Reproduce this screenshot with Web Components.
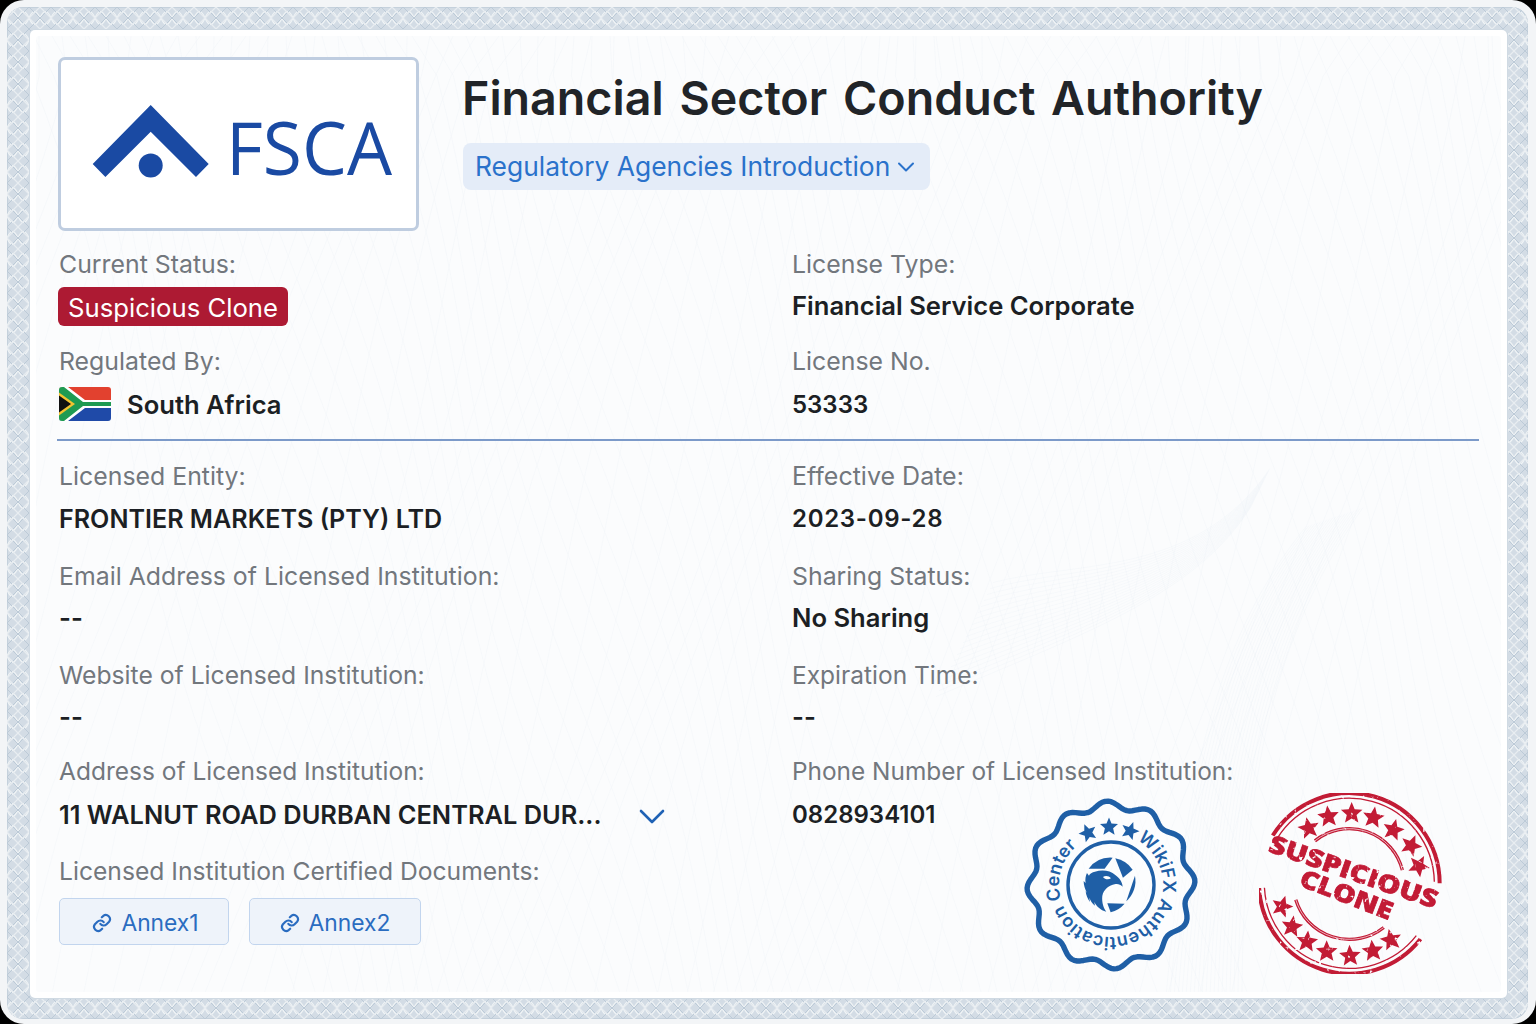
<!DOCTYPE html>
<html lang="en">
<head>
<meta charset="utf-8">
<title>FSCA</title>
<style>
	html, body { margin: 0; padding: 0; background: #000; }
	body { width: 1536px; height: 1024px; overflow: hidden; font-family: Inter, "Liberation Sans", sans-serif; }
</style>
</head>
<body>
<cert-frame>
	<cert-header title="Financial Sector Conduct Authority" link="Regulatory Agencies Introduction"></cert-header>

	<field-grid rows="97px 97px" style="margin-top:16px">
		<cert-field label="Current Status:"><status-badge>Suspicious Clone</status-badge></cert-field>
		<cert-field label="License Type:">Financial Service Corporate</cert-field>
		<cert-field label="Regulated By:" style="--value-gap:10px"><za-flag></za-flag><span style="margin-left:16px">South Africa</span></cert-field>
		<cert-field label="License No." style="--value-size:24px;--value-gap:10px">53333</cert-field>
	</field-grid>

	<field-grid class="lower" rows="100px 99px 96px 100px">
		<cert-field label="Licensed Entity:" style="--value-size:25.1px">FRONTIER MARKETS (PTY) LTD</cert-field>
		<cert-field label="Effective Date:" style="--label-size:25px;--value-size:24px;--value-track:.7px">2023-09-28</cert-field>
		<cert-field label="Email Address of Licensed Institution:" style="--value-gap:8px">--</cert-field>
		<cert-field label="Sharing Status:" style="--value-gap:8px">No Sharing</cert-field>
		<cert-field label="Website of Licensed Institution:" style="--label-size:24.7px;--value-gap:8px">--</cert-field>
		<cert-field label="Expiration Time:" style="--label-size:24.5px;--value-gap:8px">--</cert-field>
		<cert-field label="Address of Licensed Institution:" style="--label-size:24.5px;--value-size:25.4px;--value-gap:10px">11 WALNUT ROAD DURBAN CENTRAL DUR...<down-chevron></down-chevron></cert-field>
		<cert-field label="Phone Number of Licensed Institution:" style="--label-size:24.4px;--value-size:24px;--value-gap:10px">0828934101</cert-field>
		<cert-field label="Licensed Institution Certified Documents:" style="--label-size:24.65px">
			<annex-link style="padding-left:3px">Annex1</annex-link><annex-link style="margin-left:20px;width:172px">Annex2</annex-link>
		</cert-field>
	</field-grid>

	<wikifx-seal></wikifx-seal>
	<clone-stamp></clone-stamp>
</cert-frame>

<script>
(function(){

	function starPoints(cx, cy, r, rot) {
		var pts = [];
		for (var i = 0; i < 10; i++) {
			var a = (rot || 0) - Math.PI / 2 + i * Math.PI / 5;
			var rr = i % 2 ? r * 0.45 : r;
			pts.push((cx + rr * Math.cos(a)).toFixed(1) + "," + (cy + rr * Math.sin(a)).toFixed(1));
		}
		return pts.join(" ");
	}

	function arc(cx, cy, r, from, to) {
		// angles in degrees, clockwise on screen
		var a = from * Math.PI / 180, b = to * Math.PI / 180;
		var large = Math.abs(to - from) > 180 ? 1 : 0;
		return "M" + (cx + r * Math.cos(a)).toFixed(1) + "," + (cy + r * Math.sin(a)).toFixed(1) +
			" A" + r + "," + r + " 0 " + large + " 1 " + (cx + r * Math.cos(b)).toFixed(1) + "," + (cy + r * Math.sin(b)).toFixed(1);
	}

	// faint security-paper lines behind the panel
	function paperLines() {
		var out = "";
		for (var i = 0; i < 92; i++) {
			var d = "M" + (-20 + i * 18) + ",0";
			for (var y = 40; y <= 980; y += 40) {
				var x = -20 + i * 18 + y * 0.28 + 14 * Math.sin(y / 130 + i * 0.35);
				d += " L" + x.toFixed(1) + "," + y;
			}
			out += '<path d="' + d + '"/>';
		}
		for (var j = 0; j < 68; j++) {
			var e = "M" + (-20 + j * 23) + ",0";
			for (var y2 = 40; y2 <= 980; y2 += 40) {
				var x2 = -20 + j * 23 - y2 * 0.3 + 18 * Math.sin(y2 / 170 + j * 0.5);
				e += " L" + x2.toFixed(1) + "," + y2;
			}
			out += '<path d="' + e + '"/>';
		}
		return out;
	}

	function sweepLines() {
		var out = "";
		for (var k = 0; k < 20; k++) {
			out += '<path d="M' + (900 + k * 3) + ',' + (660 - k * 6) + ' C1040,' + (600 - k * 4) + ' 1160,' + (560 - k) + ' ' + (1215 + k) + ',' + (470 - k * 2) + '"/>';
			out += '<path d="M' + (1130 + k * 4) + ',' + (960) + ' C' + (1150 + k * 3) + ',740 ' + (1180 + k * 3) + ',600 ' + (1270 + k * 3) + ',' + (490 - k) + '"/>';
		}
		return out;
	}

	class CertFrame extends HTMLElement {
		constructor() {
			super();
			var shadowRoot = this.attachShadow({mode: "open"});
			shadowRoot.innerHTML = `
				<style>
					:host { display: block; width: 1536px; height: 1024px; box-sizing: border-box; padding: 7px 8px 5px 7px;
						background: #f3f5f7; border-radius: 24px; color: #1c1f24; font-family: Inter, "Liberation Sans", sans-serif; }
					.band { position: relative; height: 100%; box-sizing: border-box; padding: 23px 21px 21px 23px; border-radius: 16px; overflow: hidden; background: #d3dce5; box-shadow: inset 0 0 0 1px #c5d1dc; }
					.band > svg { position: absolute; inset: 0; width: 100%; height: 100%; }
					.panel { position: relative; height: 100%; box-sizing: border-box; padding: 27px 28px 0 28px; background: #fff; border-radius: 5px; overflow: hidden; box-shadow: 0 0 0 1px #d0dae3; }
					.paper { position: absolute; left: 6px; top: 6px; right: 6px; bottom: 6px; background: #fbfcfd; border-radius: 3px; }
					.paper svg { position: absolute; inset: 0; width: 100%; height: 100%; }
					.content { position: relative; }
				</style>
				<div class="band">
					<svg aria-hidden="true">
						<defs>
							<pattern id="weave" width="22" height="22" patternUnits="userSpaceOnUse">
								<path d="M0,11 Q5.5,-2 11,11 T22,11" fill="none" stroke="#f0f4f6" stroke-width="1.2"/>
								<path d="M0,11 Q5.5,24 11,11 T22,11" fill="none" stroke="#f0f4f6" stroke-width="1.2"/>
								<path d="M0,0 L22,22 M22,0 L0,22" fill="none" stroke="#bccad7" stroke-width="1"/>
								<path d="M11,0 L22,11 L11,22 L0,11 Z" fill="none" stroke="#e8edf1" stroke-width="1.2"/>
							</pattern>
							<filter id="soft"><feGaussianBlur stdDeviation="0.7"/></filter>
						</defs>
						<rect width="100%" height="100%" fill="url(#weave)" filter="url(#soft)"/>
					</svg>
					<div class="panel">
						<div class="paper">
							<svg aria-hidden="true" viewBox="0 0 1465 955" preserveAspectRatio="none">
								<g fill="none" stroke="#e1e8f0" stroke-width="0.5" opacity="0.35">${paperLines()}</g>
								<g fill="none" stroke="#e3eaf2" stroke-width="0.5" opacity="0.4">${sweepLines()}</g>
							</svg>
						</div>
						<div class="content"><slot></slot></div>
					</div>
				</div>
			`;
		}
	}
	customElements.define("cert-frame", CertFrame);

	class CertHeader extends HTMLElement {
		constructor() {
			super();
			var shadowRoot = this.attachShadow({mode: "open"});
			shadowRoot.innerHTML = `
				<style>
					:host { display: flex; height: 174px; }
					.logo { width: 361px; height: 174px; box-sizing: border-box; border: 3px solid #bfcde0; border-radius: 7px; background: #fff; flex: none; }
					.logo svg { display: block; }
					.side { margin-left: 44px; }
					h1 { margin: 14px 0 0 -1px; font-size: 46.6px; line-height: 54px; font-weight: 600; word-spacing: 4px; color: #212428; white-space: nowrap; }
					.pill { display: inline-flex; align-items: center; margin-top: 18px; height: 47px; padding: 0 15px 0 12px; background: #e4ecf8; border-radius: 8px; color: #2a72cb; font-size: 26.4px; }
					.pill span { position: relative; top: -1px; }
					.pill svg { margin-left: 7px; }
				</style>
				<div class="logo">
					<svg width="355" height="168" viewBox="61 60 355 168" aria-label="FSCA">
						<path fill="#1a4aa3" d="M150.7,105 L208.7,164 L196,177 L150.7,131.7 L105.4,177 L92.7,164 Z"/>
						<circle fill="#1a4aa3" cx="150.7" cy="165.5" r="12"/>
						<text x="226" y="175" font-family="'Open Sans', sans-serif" font-size="74" font-weight="500" fill="#1a4aa3" textLength="166" lengthAdjust="spacingAndGlyphs">FSCA</text>
					</svg>
				</div>
				<div class="side">
					<h1></h1>
					<div class="pill"><span class="lnk"></span>
						<svg width="18" height="12" viewBox="0 0 18 12" fill="none" stroke="#2a72cb" stroke-width="2" stroke-linecap="round" stroke-linejoin="round"><path d="M2,2.5 L9,9.5 L16,2.5"/></svg>
					</div>
				</div>
			`;
			shadowRoot.querySelector("h1").textContent = this.getAttribute("title");
			shadowRoot.querySelector(".lnk").textContent = this.getAttribute("link");
		}
	}
	customElements.define("cert-header", CertHeader);

	class FieldGrid extends HTMLElement {
		constructor() {
			super();
			var shadowRoot = this.attachShadow({mode: "open"});
			shadowRoot.innerHTML = `
				<style>
					:host { display: grid; grid-template-columns: 733px 1fr; }
					:host(.lower) { border-top: 2px solid #7c9ac9; padding-top: 18px; margin-top: -2px; margin-left: -1px; padding-left: 1px; --value-gap: 9px; }
				</style>
				<slot></slot>
			`;
			this.style.gridTemplateRows = this.getAttribute("rows");
		}
	}
	customElements.define("field-grid", FieldGrid);

	class CertField extends HTMLElement {
		constructor() {
			super();
			var shadowRoot = this.attachShadow({mode: "open"});
			shadowRoot.innerHTML = `
				<style>
					:host { display: block; padding-left: 1px; }
					.label { height: 34px; line-height: 34px; font-size: var(--label-size, 24.85px); color: #72777d; white-space: nowrap; }
					.value { display: flex; align-items: center; min-height: 34px; margin-top: var(--value-gap, 8px); font-size: var(--value-size, 25.6px); letter-spacing: var(--value-track, 0); line-height: 34px; font-weight: 600; color: #1c1f24; white-space: nowrap; }
				</style>
				<div class="label"></div>
				<div class="value"><slot></slot></div>
			`;
			shadowRoot.querySelector(".label").textContent = this.getAttribute("label");
		}
	}
	customElements.define("cert-field", CertField);

	class StatusBadge extends HTMLElement {
		constructor() {
			super();
			var shadowRoot = this.attachShadow({mode: "open"});
			shadowRoot.innerHTML = `
				<style>
					:host { display: inline-block; margin: -2px 0 0 -1px; height: 39px; line-height: 41px; padding: 0 10px; border-radius: 6px; background: #ad1a33; color: #fff; font-size: 25.7px; font-weight: 400; }
				</style>
				<slot></slot>
			`;
		}
	}
	customElements.define("status-badge", StatusBadge);

	class ZaFlag extends HTMLElement {
		constructor() {
			super();
			var shadowRoot = this.attachShadow({mode: "open"});
			shadowRoot.innerHTML = `
				<style>:host { display: inline-block; width: 52px; height: 34px; margin-top: -2px; line-height: 0; } svg { border-radius: 3px; }</style>
				<svg width="52" height="34" viewBox="0 0 52 34" aria-hidden="true">
					<rect width="52" height="17" fill="#e2412f"/>
					<rect y="17" width="52" height="17" fill="#1f4aa8"/>
					<path d="M0,0 L9,0 L26,13 L52,13 L52,21 L26,21 L9,34 L0,34 Z" fill="#fff"/>
					<path d="M0,0 L5,0 L24,15 L52,15 L52,19 L24,19 L5,34 L0,34 Z" fill="#1f9b52"/>
					<path d="M0,5.5 L16,17 L0,28.5 Z" fill="#f4c430"/>
					<path d="M0,8.5 L12,17 L0,25.5 Z" fill="#111"/>
				</svg>
			`;
		}
	}
	customElements.define("za-flag", ZaFlag);

	class DownChevron extends HTMLElement {
		constructor() {
			super();
			var shadowRoot = this.attachShadow({mode: "open"});
			shadowRoot.innerHTML = `
				<style>:host { display: inline-block; width: 26px; height: 16px; margin: 1px 0 0 37px; line-height: 0; }</style>
				<svg width="26" height="16" viewBox="0 0 26 16" fill="none" stroke="#1f62b5" stroke-width="2.6" stroke-linecap="round" stroke-linejoin="round" aria-hidden="true"><path d="M2,3 L13,14 L24,3"/></svg>
			`;
		}
	}
	customElements.define("down-chevron", DownChevron);

	class AnnexLink extends HTMLElement {
		constructor() {
			super();
			var shadowRoot = this.attachShadow({mode: "open"});
			shadowRoot.innerHTML = `
				<style>
					:host { display: inline-flex; align-items: center; justify-content: center; box-sizing: border-box; width: 170px; height: 47px; margin-top: 1px; padding-top: 2px; border: 1px solid #c2d5ee; border-radius: 5px; background: #eef3fa; color: #2a6cc0; font-size: 22.8px; font-weight: 400; }
					svg { margin-right: 9px; }
				</style>
				<svg width="20" height="20" viewBox="0 0 24 24" fill="none" stroke="#2a6cc0" stroke-width="2.6" stroke-linecap="round" stroke-linejoin="round" aria-hidden="true">
					<path d="M10 13a5 5 0 0 0 7.5.5l3-3a5 5 0 0 0-7-7l-1.7 1.7"/>
					<path d="M14 11a5 5 0 0 0-7.5-.5l-3 3a5 5 0 0 0 7 7l1.7-1.7"/>
				</svg>
				<slot></slot>
			`;
		}
	}
	customElements.define("annex-link", AnnexLink);

	class WikifxSeal extends HTMLElement {
		constructor() {
			super();
			var shadowRoot = this.attachShadow({mode: "open"});
			var wave = "";
			for (var i = 0; i <= 360; i += 2) {
				var t = i * Math.PI / 180;
				var r = 80 + 4 * Math.cos(12 * (t + 0.05));
				wave += (i ? "L" : "M") + (r * Math.cos(t)).toFixed(2) + "," + (r * Math.sin(t)).toFixed(2) + " ";
			}
			shadowRoot.innerHTML = `
				<style>
					/* panel padding box starts at 30,30 on the page; seal centre 1111,885 */
					:host { position: absolute; left: 960px; top: 735px; width: 186px; height: 186px; line-height: 0; }
				</style>
				<svg width="186" height="186" viewBox="-93 -93 186 186" aria-label="WikiFX Authentication Center">
					<path d="${wave}Z" fill="#fff" fill-opacity=".35" stroke="#1f5fa6" stroke-width="5.4" stroke-linejoin="round"/>
					<circle r="43" fill="none" stroke="#1f5fa6" stroke-width="3.4"/>
					<defs><path id="ring" d="M${(52*Math.sin(0.52)).toFixed(2)},${(-52*Math.cos(0.52)).toFixed(2)} A52,52 0 1 1 ${(-52*Math.sin(0.66)).toFixed(2)},${(-52*Math.cos(0.66)).toFixed(2)}"/></defs>
					<text font-family="Inter, 'Liberation Sans', sans-serif" font-size="18" font-weight="600" fill="#1f5fa6">
						<textPath href="#ring" textLength="262" lengthAdjust="spacing">WikiFX Authentication Center</textPath>
					</text>
					<g fill="#1f5fa6">
						<polygon points="${starPoints(-23,-52,9.5,-0.4)}"/>
						<polygon points="${starPoints(-2,-58,9.5,0)}"/>
						<polygon points="${starPoints(19,-54,9.5,0.35)}"/>
					</g>
					<g transform="translate(-50.7,-50.7) scale(0.3333)" fill="#1f5fa6">
						<path d="M85,103 A82,82 0 0 1 157,70 L133,103 Z"/>
						<path d="M165,72 A82,82 0 0 1 217,106 L188,130 Z"/>
						<path d="M224,124 A82,82 0 0 1 198,201 Z"/>
						<path d="M141,207 L193,208 A82,82 0 0 1 151,234 Z"/>
						<path d="M104,112 C125,105 150,108 165,122 C178,132 186,142 187,157 C180,150 172,148 163,150 C148,152 130,165 126,185 C124,205 130,222 138,232 C120,228 108,215 102,203 L104,214 C96,207 90,198 87,190 L89,203 C82,194 77,182 76,170 L80,176 C74,164 70,152 70,140 L76,146 C74,136 76,124 80,116 L86,124 C88,118 96,114 104,112 Z"/>
						<path d="M128,128 C135,123 146,124 152,132 C145,137 134,136 128,128 Z" fill="#fff"/>
					</g>
				</svg>
			`;
		}
	}
	customElements.define("wikifx-seal", WikifxSeal);

	class CloneStamp extends HTMLElement {
		constructor() {
			super();
			var shadowRoot = this.attachShadow({mode: "open"});
			var top = [[218,175,-.2],[277,140,-.1],[347,130,0],[412,143,.15],[472,180,.25],[525,227,.4],[548,288,.5]];
			var bot = [[138,410,.3],[168,470,.15],[213,515,.1],[272,545,0],[342,558,-.05],[410,543,-.1],[465,510,-.2]];
			var stars = top.concat(bot).map(function(s) {
				return '<polygon points="' + starPoints(s[0], s[1], 34, s[2]) + '"/>';
			}).join("");
			shadowRoot.innerHTML = `
				<style>
					:host { position: absolute; left: 1178px; top: 713px; width: 230px; height: 220px; line-height: 0; }
				</style>
				<svg width="230" height="220" viewBox="0 0 690 660" aria-label="Suspicious Clone">
					<defs>
						<filter id="worn" x="0" y="0" width="100%" height="100%">
							<feTurbulence type="fractalNoise" baseFrequency="0.07" numOctaves="2" seed="4"/>
							<feColorMatrix values="0 0 0 0 0  0 0 0 0 0  0 0 0 0 0  0 0 0 -8 6.4"/>
							<feComposite in="SourceGraphic" operator="in"/>
						</filter>
					</defs>
					<g filter="url(#worn)">
						<g fill="none" stroke="#c21a35">
							<path d="${arc(340,340,271,-148,0)}" stroke-width="12"/>
							<path d="${arc(340,340,255,-148,-1)}" stroke-width="4"/>
							<path d="${arc(340,340,271,38,177)}" stroke-width="12"/>
							<path d="${arc(340,340,255,38,177)}" stroke-width="4"/>
							<path d="${arc(340,340,164,-129,-14)}" stroke-width="10"/>
							<path d="${arc(340,340,168,52,163)}" stroke-width="10"/>
						</g>
						<g fill="none" stroke="#fff" stroke-width="2">
							<path d="${arc(340,340,164,-129,-14)}"/>
							<path d="${arc(340,340,168,52,163)}"/>
						</g>
						<g fill="#c21a35">${stars}</g>
						<g fill="#c21a35" stroke="#c21a35" stroke-width="2" font-family="'Open Sans', 'Liberation Sans', sans-serif" font-weight="800" text-anchor="middle">
							<text transform="translate(344,330) rotate(19)" font-size="74" textLength="530" lengthAdjust="spacingAndGlyphs">SUSPICIOUS</text>
							<text transform="translate(322,398) rotate(21)" font-size="74" textLength="292" lengthAdjust="spacingAndGlyphs">CLONE</text>
						</g>
					</g>
				</svg>
			`;
		}
	}
	customElements.define("clone-stamp", CloneStamp);
}())
</script>
</body>
</html>
